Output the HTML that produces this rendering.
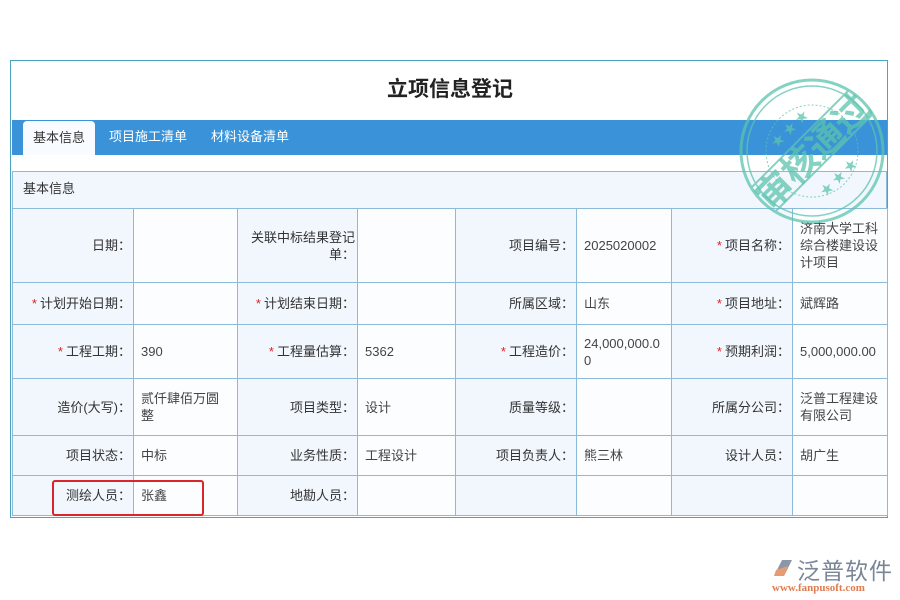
<!DOCTYPE html>
<html><head><meta charset="utf-8"><style>
body{margin:0;width:900px;height:600px;background:#fff;position:relative;overflow:hidden;font-family:"Liberation Sans","Noto Sans CJK SC",sans-serif;font-size:13px;color:#333}
.frame{position:absolute;left:10px;top:60px;width:876px;height:456px;border:1px solid #4aa3c0;}
.title{position:absolute;left:0;top:73px;width:900px;text-align:center;font-size:21px;font-weight:bold;color:#222}
.tabs{position:absolute;left:12px;top:120px;width:875px;height:35px;background:#3a93d8}
.tab{position:absolute;top:0;height:35px;line-height:33px;color:#fff;font-size:13px}
.tab.on{background:#f8fbff;color:#333;border-radius:4px 4px 0 0;top:1px;height:34px}
.sec{position:absolute;left:12px;top:171px;height:37px;border:1px solid #8dbad8;border-bottom:none;background:#f1f7fd;line-height:34px;padding-left:10px;box-sizing:border-box;width:875px}
table{position:absolute;left:12px;top:208px;border-collapse:collapse;table-layout:fixed;width:875px}
td{border:1px solid #8dbad8;padding:0 6px;line-height:17px;vertical-align:middle;word-break:break-all}
td.l{text-align:right;background:#f1f7fd;padding-right:2px}
td.v{background:#fbfdff;color:#444;padding-left:7px;padding-right:12px}
.s{color:#e02020;margin-right:3px}
.red{position:absolute;left:52px;top:480px;width:148px;height:32px;border:2px solid #d9262a;border-radius:3px}
</style></head><body>
<div class="frame"></div>
<div class="title">立项信息登记</div>
<div class="tabs">
<div class="tab on" style="left:11px;width:72px;text-align:center">基本信息</div>
<div class="tab" style="left:97px">项目施工清单</div>
<div class="tab" style="left:199px">材料设备清单</div>
</div>
<div class="sec">基本信息</div>
<table>
<colgroup><col style="width:121px"><col style="width:104px"><col style="width:120px"><col style="width:98px"><col style="width:121px"><col style="width:95px"><col style="width:121px"><col style="width:95px"></colgroup>
<tr style="height:74px"><td class="l">日期：</td><td class="v"></td><td class="l">关联中标结果登记单：</td><td class="v"></td><td class="l">项目编号：</td><td class="v">2025020002</td><td class="l"><span class="s">*</span>项目名称：</td><td class="v" style="padding-right:6px">济南大学工科综合楼建设设计项目</td></tr>
<tr style="height:42px"><td class="l"><span class="s">*</span>计划开始日期：</td><td class="v"></td><td class="l"><span class="s">*</span>计划结束日期：</td><td class="v"></td><td class="l">所属区域：</td><td class="v">山东</td><td class="l"><span class="s">*</span>项目地址：</td><td class="v">斌辉路</td></tr>
<tr style="height:54px"><td class="l"><span class="s">*</span>工程工期：</td><td class="v">390</td><td class="l"><span class="s">*</span>工程量估算：</td><td class="v">5362</td><td class="l"><span class="s">*</span>工程造价：</td><td class="v" style="padding-right:4px">24,000,000.00</td><td class="l"><span class="s">*</span>预期利润：</td><td class="v" style="padding-right:4px">5,000,000.00</td></tr>
<tr style="height:57px"><td class="l">造价(大写)：</td><td class="v" style="padding-right:16px">贰仟肆佰万圆整</td><td class="l">项目类型：</td><td class="v">设计</td><td class="l">质量等级：</td><td class="v"></td><td class="l">所属分公司：</td><td class="v" style="padding-right:6px">泛普工程建设有限公司</td></tr>
<tr style="height:40px"><td class="l">项目状态：</td><td class="v">中标</td><td class="l">业务性质：</td><td class="v">工程设计</td><td class="l">项目负责人：</td><td class="v">熊三林</td><td class="l">设计人员：</td><td class="v">胡广生</td></tr>
<tr style="height:40px"><td class="l">测绘人员：</td><td class="v">张鑫</td><td class="l">地勘人员：</td><td class="v"></td><td class="l"></td><td class="v"></td><td class="l"></td><td class="v"></td></tr>
</table>
<div class="red"></div>
<svg style="position:absolute;left:737px;top:76px" width="150" height="150" viewBox="0 0 150 150">
<g fill="none" stroke="#5cc4ae" opacity="0.75">
<circle cx="75" cy="75" r="71" stroke-width="3"/>
<circle cx="75" cy="75" r="65" stroke-width="1.5"/>
<circle cx="75" cy="75" r="46" stroke-width="1" stroke-dasharray="2 2"/>
<line x1="14" y1="112" x2="112" y2="14" stroke-width="2"/>
<line x1="38" y1="136" x2="136" y2="38" stroke-width="2"/>
</g>
<text x="75" y="89" text-anchor="middle" font-size="36" font-weight="bold" fill="#5cc4ae" opacity="0.75" transform="rotate(-45 75 75)" font-family="Noto Sans CJK SC,sans-serif">审核通过</text>
<text x="75" y="48" text-anchor="middle" font-size="13" fill="#5cc4ae" opacity="0.75" transform="rotate(-45 75 75)">★ ★ ★</text>
<text x="75" y="117" text-anchor="middle" font-size="13" fill="#5cc4ae" opacity="0.75" transform="rotate(-45 75 75)">★ ★ ★</text>
</svg>
<svg style="position:absolute;left:770px;top:556px" width="26" height="24" viewBox="0 0 26 24"><path d="M4 20 L12 4 L22 4 L14 20Z" fill="#8a97a8"/><path d="M6 14 L18 10 L14 20 L4 20Z" fill="#e89a70"/></svg>
<div style="position:absolute;left:797px;top:552px;font-size:23px;color:#7a8698;font-family:'Noto Sans CJK SC',sans-serif;letter-spacing:1px">泛普软件</div>
<div style="position:absolute;left:772px;top:582px;font-size:11px;color:#e07a50;font-family:'Liberation Serif',serif;font-weight:bold">www.fanpusoft.com</div>
</body></html>
